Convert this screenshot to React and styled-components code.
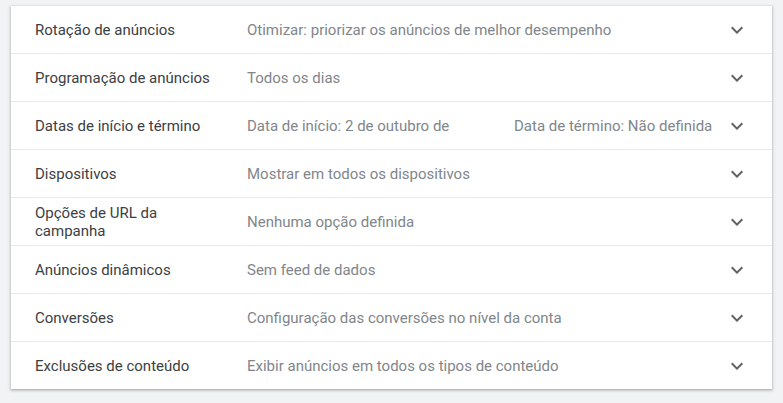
import styled, { createGlobalStyle } from "styled-components";

const GlobalStyle = createGlobalStyle`
    body {
        margin: 0;
        background: #f1f3f4;
        font-family: Roboto, "Liberation Sans", Arial, sans-serif;
    }
`;

const Page = styled.div`
    padding: 6px 11px 14px 11px;
`;

const Card = styled.div`
    width: 761px;
    background: #fff;
    box-shadow: 0 1px 2px rgba(60, 64, 67, 0.3),
        0 1px 3px 1px rgba(60, 64, 67, 0.15);
`;

const Row = styled.div`
    display: flex;
    align-items: center;

    height: 47px;
    padding: 0 23px 0 24px;

    border-bottom: 1px solid #e8eaed;

    &:last-child {
        border-bottom: none;
    }
`;

const Label = styled.div`
    flex: 0 0 180px;
    margin-right: 32px;

    font-size: 15px;
    line-height: 18px;
    color: #3c4043;
`;

const Values = styled.div`
    flex: 1;
    display: flex;
    align-items: center;
    min-width: 0;
`;

const Value = styled.div`
    flex: ${(p) => (p.w ? `0 0 ${p.w}px` : "1")};
    white-space: nowrap;
    overflow: hidden;

    font-size: 15px;
    line-height: 18px;
    color: #80868b;
`;

const Chevron = styled.svg`
    flex: 0 0 24px;
    width: 24px;
    height: 24px;
    margin-left: 2px;
    fill: #5f6368;
`;

const ROWS = [
    {
        label: "Rotação de anúncios",
        values: ["Otimizar: priorizar os anúncios de melhor desempenho"],
    },
    { label: "Programação de anúncios", values: ["Todos os dias"] },
    {
        label: "Datas de início e término",
        values: ["Data de início: 2 de outubro de", "Data de término: Não definida"],
    },
    { label: "Dispositivos", values: ["Mostrar em todos os dispositivos"] },
    { label: "Opções de URL da campanha", values: ["Nenhuma opção definida"] },
    { label: "Anúncios dinâmicos", values: ["Sem feed de dados"] },
    {
        label: "Conversões",
        values: ["Configuração das conversões no nível da conta"],
    },
    {
        label: "Exclusões de conteúdo",
        values: ["Exibir anúncios em todos os tipos de conteúdo"],
    },
];

function App() {
    return (
        <Page>
            <GlobalStyle />
            <Card>
                {ROWS.map((row) => (
                    <Row key={row.label}>
                        <Label>{row.label}</Label>
                        <Values>
                            {row.values.map((v, i) => (
                                <Value
                                    key={v}
                                    w={row.values.length > 1 && i === 0 ? 267 : 0}
                                >
                                    {v}
                                </Value>
                            ))}
                        </Values>
                        <Chevron viewBox="0 0 24 24">
                            <path d="M16.59 8.59L12 13.17 7.41 8.59 6 10l6 6 6-6z" />
                        </Chevron>
                    </Row>
                ))}
            </Card>
        </Page>
    );
}

export default App;
